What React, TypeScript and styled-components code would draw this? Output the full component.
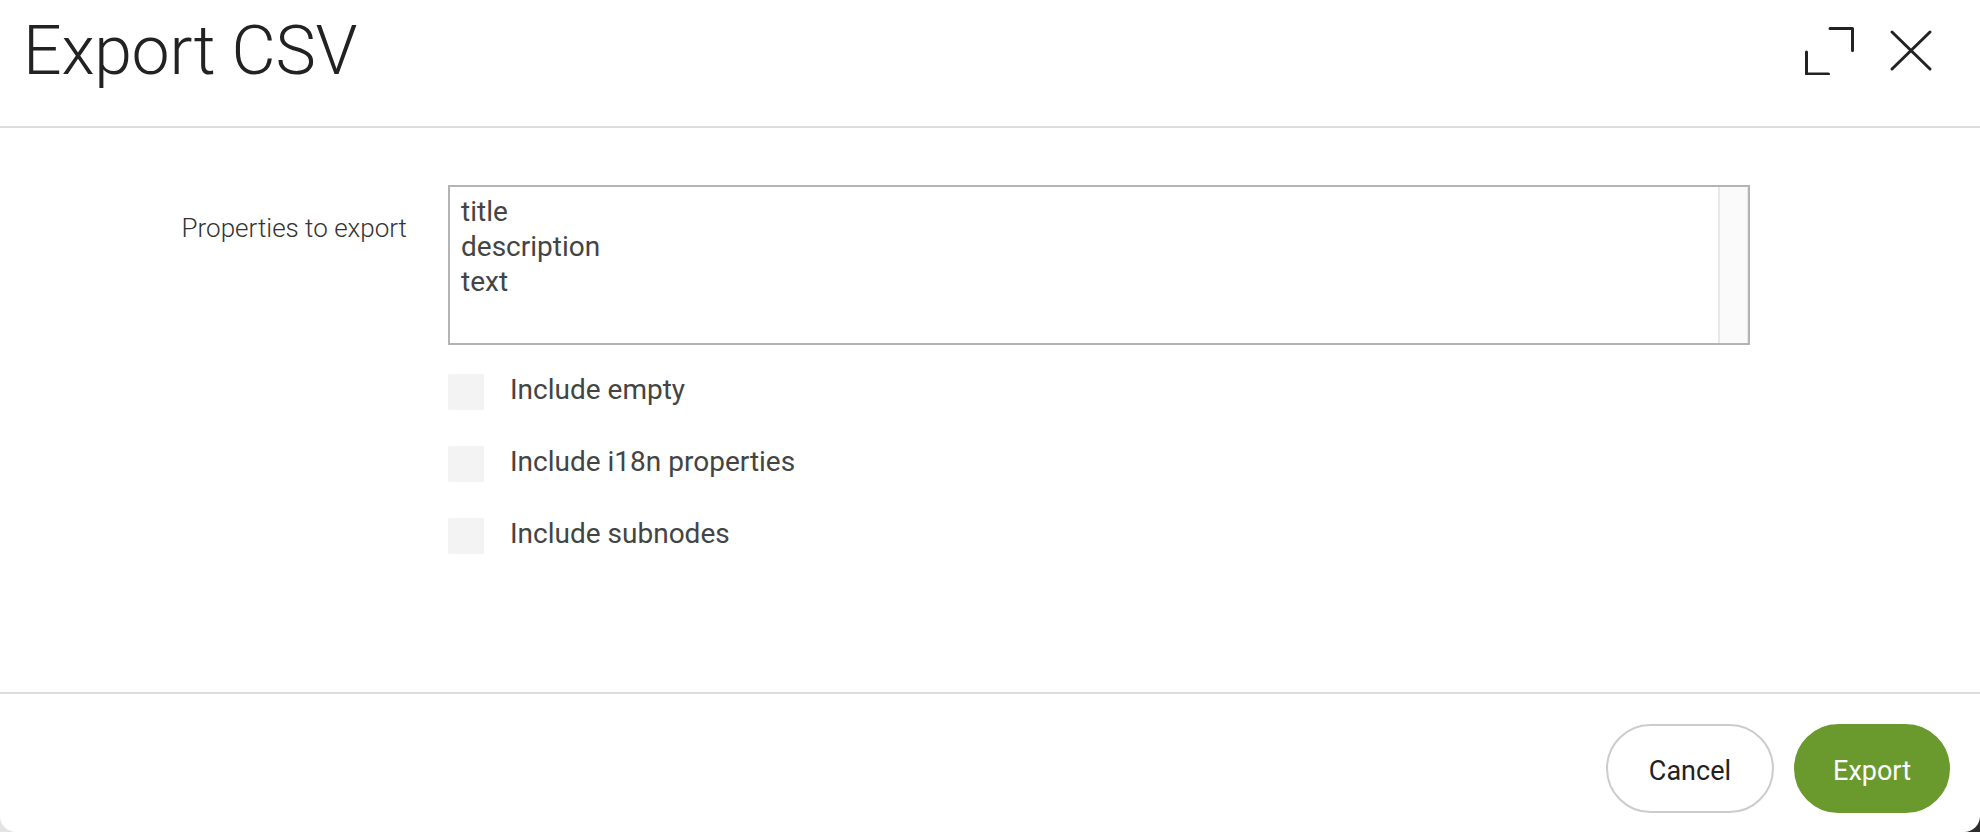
import { FC, useState } from "react";
import styled, { createGlobalStyle } from "styled-components";

const GlobalStyle = createGlobalStyle`
  html, body {
    margin: 0;
    padding: 0;
    height: 100%;
  }
  body {
    background: linear-gradient(to right, #e4e4e4 0%, #9a9a9a 50%, #2c2c2c 100%);
    font-family: Roboto, "Liberation Sans", sans-serif;
    overflow: hidden;
  }
`;

const options = ["Include empty", "Include i18n properties", "Include subnodes"];

const App: FC = () => {
  const [props, setProps] = useState("title\ndescription\ntext");
  const [checked, setChecked] = useState<Record<string, boolean>>({});

  const toggle = (name: string) => {
    setChecked((prev) => ({ ...prev, [name]: !prev[name] }));
  };

  return (
    <>
      <GlobalStyle />
      <Modal>
        <Header>
          <Title>Export CSV</Title>
          <HeaderIcons>
            <IconButton aria-label="Maximize">
              <svg width="50" height="50" viewBox="0 0 50 50" fill="none">
                <path
                  d="M26 3.5H48.5V25.5M2.5 27V49H24.5"
                  stroke="#222"
                  strokeWidth="3"
                  strokeLinecap="round"
                  strokeLinejoin="round"
                />
              </svg>
            </IconButton>
            <IconButton aria-label="Close">
              <svg width="44" height="44" viewBox="0 0 44 44" fill="none">
                <path
                  d="M3 4L41 41M41 4L3 41"
                  stroke="#222"
                  strokeWidth="3"
                  strokeLinecap="round"
                />
              </svg>
            </IconButton>
          </HeaderIcons>
        </Header>

        <Body>
          <FieldLabel>Properties to export</FieldLabel>
          <FieldColumn>
            <TextBox>
              <PropsArea
                value={props}
                onChange={(e) => setProps(e.target.value)}
                spellCheck={false}
              />
              <ScrollTrack />
            </TextBox>
            <OptionList>
              {options.map((item) => (
                <OptionRow key={item}>
                  <Check
                    type="checkbox"
                    checked={!!checked[item]}
                    onChange={() => toggle(item)}
                  />
                  <OptionText onClick={() => toggle(item)}>{item}</OptionText>
                </OptionRow>
              ))}
            </OptionList>
          </FieldColumn>
        </Body>

        <Footer>
          <Button>Cancel</Button>
          <Button primary>Export</Button>
        </Footer>
      </Modal>
    </>
  );
};

export default App;

const Modal = styled.div`
  width: 1980px;
  height: 832px;
  background: #ffffff;
  border-radius: 0 0 16px 16px;
  display: flex;
  flex-direction: column;
  box-sizing: border-box;
`;

const Header = styled.div`
  height: 128px;
  flex-shrink: 0;
  display: flex;
  justify-content: space-between;
  align-items: flex-start;
  padding: 17px 47px 0 23px;
  border-bottom: 2px solid #dcdcdc;
  box-sizing: border-box;
`;

const Title = styled.h1`
  margin: 0;
  font-size: 68px;
  line-height: 68px;
  font-weight: 300;
  color: #222222;
  letter-spacing: -0.3px;
`;

const HeaderIcons = styled.div`
  display: flex;
  align-items: center;
  gap: 35px;
  margin-top: 8px;
`;

const IconButton = styled.button`
  display: flex;
  align-items: center;
  justify-content: center;
  padding: 0;
  border: none;
  background: transparent;
  cursor: pointer;
`;

const Body = styled.div`
  flex: 1;
  display: grid;
  grid-template-columns: 407px 1302px;
  column-gap: 41px;
  align-items: start;
  padding-top: 57px;
  box-sizing: border-box;
`;

const FieldLabel = styled.label`
  text-align: right;
  font-size: 26px;
  line-height: 30px;
  font-weight: 300;
  color: #333333;
  margin-top: 28px;
`;

const FieldColumn = styled.div`
  display: flex;
  flex-direction: column;
`;

const TextBox = styled.div`
  display: flex;
  height: 160px;
  border: 2px solid #b4b4b4;
  box-sizing: border-box;
`;

const PropsArea = styled.textarea`
  flex: 1;
  height: 100%;
  box-sizing: border-box;
  border: none;
  padding: 7px 11px;
  margin: 0;
  font-family: Roboto, "Liberation Sans", sans-serif;
  font-size: 28px;
  line-height: 35px;
  color: #444444;
  resize: none;
  outline: none;
  overflow: hidden;
`;

const ScrollTrack = styled.div`
  width: 27px;
  flex-shrink: 0;
  background: #fafafa;
  border-left: 2px solid #e8e8e8;
  border-right: 1px solid #e8e8e8;
`;

const OptionList = styled.div`
  display: flex;
  flex-direction: column;
  gap: 36px;
  margin-top: 29px;
`;

const OptionRow = styled.div`
  display: flex;
  align-items: center;
  gap: 26px;
  height: 36px;
`;

const Check = styled.input`
  appearance: none;
  width: 36px;
  height: 36px;
  margin: 0;
  background: #f3f3f3;
  border-radius: 2px;
  cursor: pointer;
  flex-shrink: 0;

  &:checked {
    background: #6a992e;
  }
`;

const OptionText = styled.span`
  font-size: 28px;
  line-height: 32px;
  color: #444444;
  margin-top: -4px;
  cursor: pointer;
`;

const Footer = styled.div`
  height: 140px;
  flex-shrink: 0;
  display: flex;
  justify-content: flex-end;
  align-items: flex-start;
  gap: 20px;
  padding: 30px 30px 0 0;
  border-top: 2px solid #dcdcdc;
  box-sizing: border-box;
`;

const Button = styled.button<{ primary?: boolean }>`
  height: 89px;
  padding: 4px ${(p) => (p.primary ? "37px" : "41px")} 0;
  border-radius: 45px;
  border: 2px solid ${(p) => (p.primary ? "#6a992e" : "#cccccc")};
  background: ${(p) => (p.primary ? "#6a992e" : "#ffffff")};
  color: ${(p) => (p.primary ? "#ffffff" : "#222222")};
  font-family: Roboto, "Liberation Sans", sans-serif;
  font-size: 27px;
  font-weight: 400;
  cursor: pointer;
  box-sizing: border-box;
`;
